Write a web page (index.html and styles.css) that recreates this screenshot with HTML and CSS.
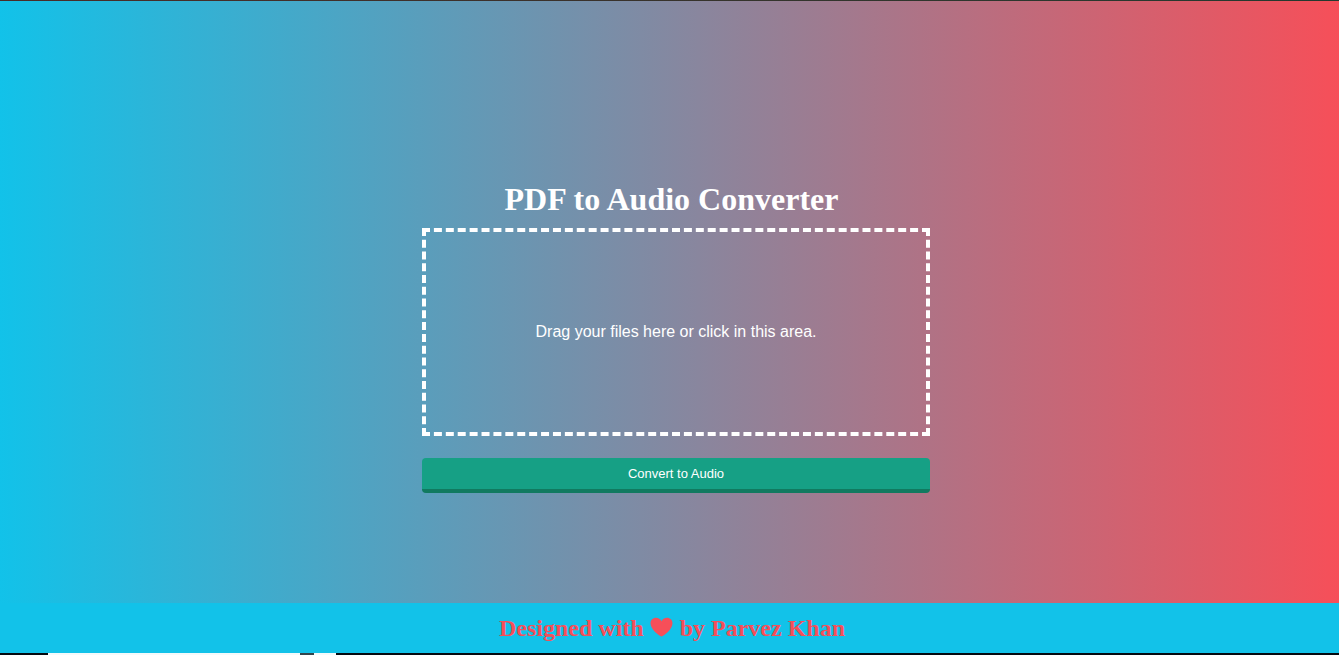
FILE: index.html
```html
<!DOCTYPE html>
<html lang="en">
<head>
<meta charset="utf-8">
<title>PDF to Audio Converter</title>
<link rel="stylesheet" href="styles.css">
</head>
<body>
<div class="top-edge"></div>
<main class="page">
  <form class="converter">
    <h1 class="title">PDF to Audio Converter</h1>
    <label class="drop-zone">
      <input class="file-input" type="file" accept="application/pdf">
      <span>Drag your files here or click in this area.</span>
    </label>
    <button class="convert" type="button">Convert to Audio</button>
  </form>
</main>
<footer class="footer">
  <h2 class="credit">Designed with <svg class="heart" viewBox="0 0 24 20" aria-hidden="true"><path d="M11.500 19.500C9 18.500 0.500 12.500 0.500 6.200C0.500 3 3 0.700 6 0.700C8.500 0.700 10.500 2 11.500 4.200C12.500 2 14.500 0.700 17 0.700C20 0.700 22.500 3 22.500 6.200C22.500 12.500 14 18.500 11.500 19.500Z"/></svg> by Parvez Khan</h2>
</footer>
<div class="taskbar"><span class="taskbar-search"></span></div>
</body>
</html>
```
FILE: styles.css
```css
* {
  box-sizing: border-box;
}

body {
  display: flex;
  flex-direction: column;
  min-height: 100vh;
  margin: 0;
  background: linear-gradient(to right, #12c2e9, #f64f59);
  font-family: "Liberation Serif", "Times New Roman", serif;
}

.top-edge {
  height: 1px;
  background: linear-gradient(to right, #4a2c28, #24392f);
}

.page {
  display: flex;
  flex: 1;
  flex-direction: column;
  align-items: center;
  justify-content: center;
  padding: 69px 0 0 13px;
}

.converter {
  display: flex;
  flex-direction: column;
  width: 508px;
  max-width: 100%;
}

.title {
  margin: 0 9px 11px 0;
  color: #fff;
  font-size: 32px;
  line-height: 36px;
  text-align: center;
}

.drop-zone {
  display: flex;
  position: relative;
  align-items: center;
  justify-content: center;
  min-height: 208px;
  border: 4px dashed #fff;
  color: #fff;
  font-family: "Liberation Sans", Arial, sans-serif;
  font-size: 16px;
  line-height: 20px;
  cursor: pointer;
}

.file-input {
  position: absolute;
  inset: 0;
  width: 100%;
  height: 100%;
  opacity: 0;
  cursor: pointer;
}

.convert {
  height: 35px;
  margin: 22px 0 0;
  padding: 0;
  border: 0;
  border-bottom: 4px solid #117a60;
  border-radius: 4px;
  background: #16a085;
  color: #fff;
  font-family: "Liberation Sans", Arial, sans-serif;
  font-size: 13px;
  cursor: pointer;
}

.footer {
  padding: 12px 0;
  background: #12c2e9;
}

.credit {
  margin: 0 0 0 5px;
  color: #f64f59;
  font-size: 24px;
  line-height: 26px;
  text-align: center;
}

.heart {
  width: 24px;
  height: 20px;
  vertical-align: -1px;
  fill: currentColor;
}

.taskbar {
  height: 2px;
  padding-left: 48px;
  background: #050a10;
}

.taskbar-search {
  display: block;
  width: 288px;
  max-width: 100%;
  height: 2px;
  background: linear-gradient(to right, #f4fafb 252px, #34454c 252px 266px, #f4fafb 266px);
}
```
